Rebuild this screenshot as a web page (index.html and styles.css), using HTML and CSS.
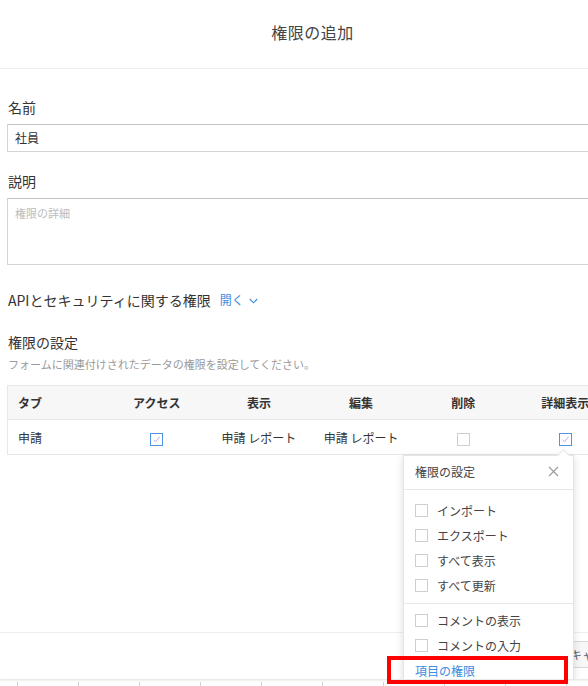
FILE: index.html
```html
<!DOCTYPE html>
<html lang="ja">
<head>
<meta charset="utf-8">
<title>権限の追加</title>
<link rel="stylesheet" href="styles.css">
</head>
<body>
<div class="modal">
  <div class="modal-header">
    <h1 class="modal-title">権限の追加</h1>
  </div>
  <div class="modal-body">
    <div class="field">
      <div class="field-label">名前</div>
      <div class="input">社員</div>
    </div>
    <div class="field">
      <div class="field-label">説明</div>
      <div class="textarea"><span class="placeholder">権限の詳細</span></div>
    </div>
    <div class="api-row">
      <span>APIとセキュリティに関する権限</span>
      <span class="toggle">開く<svg class="chev" width="9" height="6" viewBox="0 0 9 6"><path d="M0.8 1 L4.5 4.8 L8.2 1" fill="none" stroke="currentColor" stroke-width="1.1"/></svg></span>
    </div>
    <div class="section-title">権限の設定</div>
    <div class="section-desc">フォームに関連付けされたデータの権限を設定してください。</div>

    <div class="perm-wrap">
      <table class="perm-table">
        <colgroup>
          <col class="c-tab"><col class="c-std"><col class="c-std"><col class="c-std"><col class="c-std"><col class="c-std">
        </colgroup>
        <thead>
          <tr>
            <th class="left">タブ</th>
            <th>アクセス</th>
            <th>表示</th>
            <th>編集</th>
            <th>削除</th>
            <th>詳細表示</th>
          </tr>
        </thead>
        <tbody>
          <tr>
            <td class="left">申請</td>
            <td><span class="cb on"><svg width="11" height="11" viewBox="0 0 11 11"><path d="M2.6 5.8 L4.6 7.9 L8.6 2.8" fill="none" stroke="#b4acea" stroke-width="1"/></svg></span></td>
            <td>申請 レポート</td>
            <td>申請 レポート</td>
            <td><span class="cb"></span></td>
            <td><span class="cb on"><svg width="11" height="11" viewBox="0 0 11 11"><path d="M2.6 5.8 L4.6 7.9 L8.6 2.8" fill="none" stroke="#b4acea" stroke-width="1"/></svg></span></td>
          </tr>
        </tbody>
      </table>

      <div class="popover">
        <div class="pop-head">
          <span>権限の設定</span>
          <svg class="pop-close" width="11" height="11" viewBox="0 0 11 11"><path d="M1 1 L10 10 M10 1 L1 10" fill="none" stroke="#9a9a9a" stroke-width="1.1"/></svg>
        </div>
        <ul class="pop-list">
          <li><span class="cb"></span>インポート</li>
          <li><span class="cb"></span>エクスポート</li>
          <li><span class="cb"></span>すべて表示</li>
          <li><span class="cb"></span>すべて更新</li>
        </ul>
        <ul class="pop-list second">
          <li><span class="cb"></span>コメントの表示</li>
          <li><span class="cb"></span>コメントの入力</li>
          <li class="pop-link">項目の権限</li>
        </ul>
      </div>
    </div>
  </div>
  <div class="modal-footer">
    <button class="btn primary">保存</button>
    <button class="btn">キャンセル</button>
  </div>
</div>
<div class="ruler">
  <span></span><span></span><span></span><span></span><span></span><span></span><span></span><span></span><span></span><span></span>
</div>
<div class="highlight"></div>
</body>
</html>
```
FILE: styles.css
```css
html, body {
  margin: 0;
  padding: 0;
  overflow: hidden;
  background: #ffffff;
}
body {
  position: relative;
  width: 588px;
  height: 686px;
  font-family: "Noto Sans CJK JP", "Noto Sans", sans-serif;
  color: #333333;
}

.modal {
  width: 625px;
  height: 679px;
  display: flex;
  flex-direction: column;
  overflow: hidden;
  background: #ffffff;
  box-shadow: 0 1px 3px rgba(0, 0, 0, 0.14);
}

.modal-header {
  flex: none;
  display: flex;
  align-items: center;
  justify-content: center;
  border-bottom: 1px solid #eeeeee;
  padding-bottom: 4px;
  box-sizing: border-box;
  height: 69px;
}
.modal-title {
  margin: 0;
  font-size: 16px;
  font-weight: 400;
  color: #444444;
  letter-spacing: 0.5px;
}

.modal-body {
  flex: 1;
  padding: 28px 7px 0;
  position: relative;
}

.field-label {
  font-size: 14px;
  line-height: 20px;
  margin-bottom: 7px;
  margin-left: 1px;
  color: #333333;
}
.field + .field {
  margin-top: 19px;
}
.input {
  height: 28px;
  box-sizing: border-box;
  border: 1px solid #d4d4d4;
  border-top-color: #c4c4c4;
  padding: 0 7px;
  font-size: 12px;
  line-height: 26px;
  color: #333333;
}
.textarea {
  height: 67px;
  box-sizing: border-box;
  border: 1px solid #d4d4d4;
  border-top-color: #c4c4c4;
  padding: 6px 7px;
  font-size: 11px;
  line-height: 16px;
}
.placeholder {
  color: #bbbbbb;
}

.api-row {
  margin-top: 25px;
  margin-left: 1px;
  font-size: 14px;
  line-height: 20px;
  display: flex;
  align-items: center;
  gap: 9px;
}
.toggle {
  display: inline-flex;
  align-items: center;
  font-size: 12px;
  color: #3b8ee0;
}
.chev {
  margin-left: 5px;
  margin-top: 2px;
}

.section-title {
  margin-top: 22px;
  margin-left: 1px;
  font-size: 14px;
  line-height: 20px;
}
.section-desc {
  margin-top: 4px;
  margin-left: 1px;
  font-size: 11px;
  line-height: 16px;
  color: #9a9a9a;
}

.perm-wrap {
  position: relative;
  margin-top: 13px;
}
.perm-table {
  width: 610px;
  table-layout: fixed;
  border-collapse: collapse;
  border: 1px solid #e8e8e8;
  font-size: 12px;
}
.c-tab { width: 98px; }
.c-std { width: 102px; }
.perm-table th {
  height: 33px;
  background: #f7f7f7;
  font-weight: 700;
  color: #333333;
  text-align: center;
  border-bottom: 1px solid #e8e8e8;
  padding: 0;
}
.perm-table td {
  height: 34px;
  text-align: center;
  color: #333333;
  padding: 0;
}
.perm-table .left {
  text-align: left;
  padding-left: 10px;
}

.cb {
  display: inline-block;
  width: 13px;
  height: 13px;
  box-sizing: border-box;
  border: 1px solid #cfcfcf;
  background: #ffffff;
  vertical-align: middle;
  position: relative;
}
.cb svg {
  display: block;
  position: absolute;
  left: 0;
  top: 0;
}
.cb.on {
  border-color: #4f93e6;
}

.popover {
  position: absolute;
  left: 396px;
  top: 70px;
  width: 169px;
  background: #ffffff;
  border: 1px solid #e4e4e4;
  box-shadow: 0 2px 8px rgba(0, 0, 0, 0.13);
  z-index: 5;
}
.popover::before {
  content: "";
  position: absolute;
  top: -5px;
  left: 155px;
  width: 8px;
  height: 8px;
  background: #ffffff;
  border-top: 1px solid #e4e4e4;
  border-left: 1px solid #e4e4e4;
  transform: rotate(45deg);
}
.pop-head {
  height: 34px;
  box-sizing: border-box;
  padding: 0 14px 3px 11px;
  display: flex;
  align-items: center;
  justify-content: space-between;
  border-bottom: 1px solid #e8e8e8;
  font-size: 12px;
  color: #444444;
}
.pop-list {
  list-style: none;
  margin: 0;
  padding: 8px 0 5px;
}
.pop-list.second {
  border-top: 1px solid #e8e8e8;
  padding-top: 4px;
}
.pop-list li {
  height: 25px;
  display: flex;
  align-items: center;
  gap: 9px;
  padding-left: 11px;
  font-size: 12px;
  color: #444444;
}
.pop-list li.pop-link {
  color: #3b8ee0;
}

.modal-footer {
  flex: none;
  height: 47px;
  box-sizing: border-box;
  border-top: 1px solid #eeeeee;
  display: flex;
  justify-content: flex-end;
  align-items: flex-start;
  gap: 8px;
  padding-top: 8px;
  width: 641px;
}
.btn {
  height: 27px;
  padding: 0 10px;
  font-family: inherit;
  font-size: 12px;
  color: #666666;
  background: #f7f7f7;
  border: 1px solid #d8d8d8;
  white-space: nowrap;
}
.btn.primary {
  color: #ffffff;
  background: #3b8ee0;
  border-color: #3b8ee0;
}

.ruler {
  display: flex;
  padding: 3px 0 0 17px;
  height: 4px;
}
.ruler span {
  flex: none;
  width: 60px;
  height: 4px;
  border-left: 1px solid #d0d0d0;
}

.highlight {
  position: absolute;
  left: 387px;
  top: 656px;
  width: 181px;
  height: 28px;
  box-sizing: border-box;
  border: 4px solid #ff0000;
  z-index: 20;
}
```
